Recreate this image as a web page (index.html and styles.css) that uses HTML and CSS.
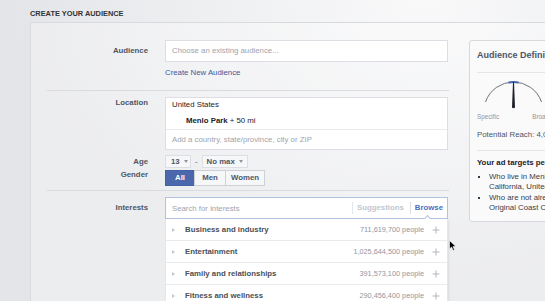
FILE: index.html
```html
<!DOCTYPE html>
<html>
<head>
<meta charset="utf-8">
<link rel="stylesheet" href="styles.css">
</head>
<body>
<div class="page">
  <h2 class="section-title">CREATE YOUR AUDIENCE</h2>
  <div class="panel">
    <div class="form">
      <div class="row audience-row">
        <div class="label">Audience</div>
        <div class="field">
          <div class="input placeholder">Choose an existing audience...</div>
          <a class="link" href="#">Create New Audience</a>
        </div>
      </div>
      <div class="divider divider-a"></div>
      <div class="row location-row">
        <div class="label">Location</div>
        <div class="location-box">
          <div class="loc-selected">
            <div class="loc-line">United States</div>
            <div class="loc-line loc-sub"><b>Menlo Park</b> + 50 mi</div>
          </div>
          <div class="loc-input">Add a country, state/province, city or ZIP</div>
        </div>
      </div>
      <div class="row age-row">
        <div class="label">Age</div>
        <div class="age-controls">
          <div class="select sel-min">13<span class="caret"></span></div>
          <span class="dash">-</span>
          <div class="select sel-max">No max<span class="caret"></span></div>
        </div>
      </div>
      <div class="row gender-row">
        <div class="label">Gender</div>
        <div class="seg">
          <div class="seg-btn seg-all active">All</div>
          <div class="seg-btn seg-men">Men</div>
          <div class="seg-btn seg-women">Women</div>
        </div>
      </div>
      <div class="divider divider-b"></div>
      <div class="row interests-row">
        <div class="label">Interests</div>
        <div class="field">
          <div class="search">
            <span class="search-ph">Search for interests</span>
            <span class="tab tab-sug">Suggestions</span>
            <span class="tab tab-browse">Browse</span>
            <span class="notch"></span>
          </div>
          <div class="list">
            <div class="item"><span class="tri"></span><span class="item-name">Business and industry</span><span class="count">711,619,700 people</span><svg class="plus" width="8" height="8" viewBox="0 0 8 8"><path d="M4 0.5V7.5M0.5 4H7.5" stroke="#b0b5bd" stroke-width="1"/></svg></div>
            <div class="item"><span class="tri"></span><span class="item-name">Entertainment</span><span class="count">1,025,644,500 people</span><svg class="plus" width="8" height="8" viewBox="0 0 8 8"><path d="M4 0.5V7.5M0.5 4H7.5" stroke="#b0b5bd" stroke-width="1"/></svg></div>
            <div class="item"><span class="tri"></span><span class="item-name">Family and relationships</span><span class="count">391,573,100 people</span><svg class="plus" width="8" height="8" viewBox="0 0 8 8"><path d="M4 0.5V7.5M0.5 4H7.5" stroke="#b0b5bd" stroke-width="1"/></svg></div>
            <div class="item"><span class="tri"></span><span class="item-name">Fitness and wellness</span><span class="count">290,456,400 people</span><svg class="plus" width="8" height="8" viewBox="0 0 8 8"><path d="M4 0.5V7.5M0.5 4H7.5" stroke="#b0b5bd" stroke-width="1"/></svg></div>
          </div>
        </div>
      </div>
    </div>
    <aside class="sidebar">
      <div class="sb-head">Audience Definition</div>
      <div class="sb-body">
        <svg class="gauge" width="72" height="34" viewBox="0 0 72 34">
          <path d="M8.5 24 A29.6 29.6 0 0 1 64.5 24" fill="none" stroke="#6f737b" stroke-width="1"/>
          <path d="M31.5 4.43 A29.6 29.6 0 0 1 41.5 4.43" fill="none" stroke="#4267b2" stroke-width="2"/>
          <path d="M36 4 L37 4 L38 29.5 Q36.5 31 35 29.5 Z" fill="#1d2129"/>
        </svg>
        <div class="gauge-labels"><span>Specific</span><span>Broad</span></div>
        <div class="reach">Potential Reach: 4,000,000 people</div>
        <div class="sb-div"></div>
        <div class="targets-title">Your ad targets people:</div>
        <ul class="targets">
          <li>Who live in Menlo Park +50 mi, California, United States</li>
          <li>Who are not already connected to Original Coast Clothing</li>
        </ul>
      </div>
    </aside>
  </div>
</div>
<svg class="cursor" width="8" height="11" viewBox="0 0 8 11"><path d="M0.5 0.5 L0.5 9 L2.6 7.1 L4.1 10.4 L5.5 9.8 L4 6.6 L6.9 6.6 Z" fill="#000" stroke="#fff" stroke-width="0.6"/></svg>
</body>
</html>
```
FILE: styles.css
```css
html, body {
  margin: 0;
  overflow: hidden;
}
body {
  width: 545px;
  height: 301px;
  position: relative;
  font-family: "Liberation Sans", Arial, sans-serif;
  font-size: 7.8px;
  color: #1d2129;
  background: radial-gradient(ellipse 75% 95% at 78% 0%, #f9f9fa 0%, #eeeff1 55%, #e4e5e8 100%);
}
.page {
  padding: 9px 0 0 30px;
}
.section-title {
  margin: 0 0 3px;
  font-size: 7.4px;
  line-height: 10px;
  font-weight: bold;
  color: #333;
}
.panel {
  display: flex;
  align-items: flex-start;
  width: 640px;
  height: 300px;
  box-sizing: border-box;
  border-top: 1px solid #d9dadd;
  border-left: 1px solid #d9dadd;
  padding: 17px 0 0 16px;
  background: rgba(255, 255, 255, 0.3);
}
.form {
  width: 402px;
  flex: none;
}
.row {
  display: grid;
  grid-template-columns: 101px 283px;
  column-gap: 17px;
}
.label {
  text-align: right;
  font-weight: bold;
  color: #4e5665;
}
.audience-row .label,
.interests-row .label {
  line-height: 22px;
}
.input {
  height: 22px;
  box-sizing: border-box;
  border: 1px solid #dcdee3;
  background: #fff;
  padding: 0 6px;
  line-height: 20px;
}
.placeholder {
  color: #9ea3ad;
}
.link {
  display: block;
  margin-top: 5px;
  line-height: 12px;
  color: #3b5998;
  text-decoration: none;
}
.divider {
  height: 1px;
  background: #dadbde;
}
.divider-a {
  margin-top: 11px;
}
.location-row {
  margin-top: 6px;
}
.location-row .label {
  line-height: 11px;
}
.location-box {
  border: 1px solid #dcdee3;
  background: #fff;
}
.loc-selected {
  padding: 1px 6px 2px;
}
.loc-line {
  line-height: 12px;
}
.loc-sub {
  margin-top: 4px;
  padding-left: 14px;
}
.loc-sub b {
  font-weight: bold;
}
.loc-input {
  border-top: 1px solid #e9eaed;
  height: 19px;
  line-height: 19px;
  padding: 0 6px;
  color: #9ea3ad;
}
.age-row {
  margin-top: 5px;
}
.age-row .label {
  line-height: 13px;
}
.age-controls {
  display: flex;
  align-items: center;
}
.select {
  height: 13px;
  box-sizing: border-box;
  border: 1px solid #dcdee3;
  background: #f6f7f9;
  display: flex;
  align-items: center;
  gap: 4px;
  color: #4e5665;
  font-weight: bold;
}
.sel-min {
  width: 26px;
  padding-left: 5px;
}
.sel-max {
  width: 46px;
  padding-left: 4px;
}
.caret {
  width: 0;
  height: 0;
  border-left: 2.5px solid transparent;
  border-right: 2.5px solid transparent;
  border-top: 3px solid #90949c;
}
.dash {
  margin: 0 4px;
  color: #4e5665;
}
.gender-row {
  margin-top: 2px;
}
.gender-row .label {
  line-height: 10px;
}
.seg {
  display: flex;
  height: 16px;
}
.seg-btn {
  box-sizing: border-box;
  height: 16px;
  border: 1px solid #ced0d4;
  background: #f6f7f9;
  color: #4e5665;
  font-weight: bold;
  line-height: 14px;
  text-align: center;
}
.seg-btn + .seg-btn {
  margin-left: -1px;
}
.seg-all {
  width: 30px;
}
.seg-men {
  width: 32px;
}
.seg-women {
  width: 40px;
}
.seg-btn.active {
  background: #4a68ab;
  border-color: #4264a6;
  color: #fff;
}
.divider-b {
  margin-top: 4px;
}
.interests-row {
  margin-top: 6px;
}
.search {
  position: relative;
  display: flex;
  align-items: center;
  height: 22px;
  box-sizing: border-box;
  border: 1px solid #b3c1e0;
  background: #fff;
  padding-left: 6px;
}
.search-ph {
  flex: 1;
  color: #9ea3ad;
}
.tab {
  font-weight: bold;
  line-height: 12px;
}
.tab-sug {
  border-left: 1px solid #e6e7ea;
  padding: 0 6px 0 4px;
  color: #c3c7ce;
}
.tab-browse {
  border-left: 1px solid #dcdee3;
  padding: 0 4px 0 4px;
  color: #4a6fc0;
}
.notch {
  position: absolute;
  right: 17px;
  bottom: -3px;
  width: 4px;
  height: 4px;
  background: #fff;
  border-top: 1px solid #b3c1e0;
  border-left: 1px solid #b3c1e0;
  transform: rotate(45deg);
  z-index: 2;
}
.list {
  box-shadow: 1px 1px 2px rgba(0, 0, 0, 0.08);
}
.item {
  display: flex;
  align-items: center;
  height: 22px;
  box-sizing: border-box;
  background: #fff;
  border-left: 1px solid #e5e6e9;
  border-right: 1px solid #e5e6e9;
  border-bottom: 1px solid #e9ebee;
  padding: 0 7px 0 6px;
}
.tri {
  width: 0;
  height: 0;
  border-left: 3px solid #c4c8ce;
  border-top: 2.5px solid transparent;
  border-bottom: 2.5px solid transparent;
  margin-right: 10px;
}
.item-name {
  flex: 1;
  font-weight: bold;
  color: #4b4f56;
}
.count {
  font-size: 7.3px;
  color: #9197a3;
}
.plus {
  display: block;
  margin-left: 8px;
}
.sidebar {
  flex: none;
  margin-left: 20px;
  width: 151px;
  box-sizing: border-box;
  border: 1px solid #d6d8dc;
  border-radius: 3px;
  background: #fafafb;
}
.sb-head {
  margin-left: 7px;
  padding: 9px 0 11px;
  line-height: 11px;
  font-size: 9px;
  font-weight: bold;
  color: #4e5665;
  border-bottom: 1px solid #e5e6e9;
}
.sb-body {
  padding: 5px 0 8px 7px;
}
.gauge {
  display: block;
}
.gauge-labels {
  display: flex;
  justify-content: space-between;
  width: 72px;
  margin-top: 1px;
  font-size: 6.3px;
  line-height: 8px;
  color: #90949c;
}
.reach {
  margin-top: 8px;
  line-height: 12px;
  color: #4e5665;
  white-space: nowrap;
}
.sb-div {
  margin-top: 9px;
  height: 1px;
  background: #e5e6e9;
}
.targets-title {
  margin-top: 6px;
  line-height: 12px;
  font-weight: bold;
  color: #1d2129;
  white-space: nowrap;
}
.targets {
  margin: 3px 0 0;
  padding: 0 0 0 12px;
  width: 118px;
  line-height: 10.3px;
  list-style: square;
  color: #373d48;
}
.cursor {
  position: absolute;
  left: 449px;
  top: 240px;
}
```
